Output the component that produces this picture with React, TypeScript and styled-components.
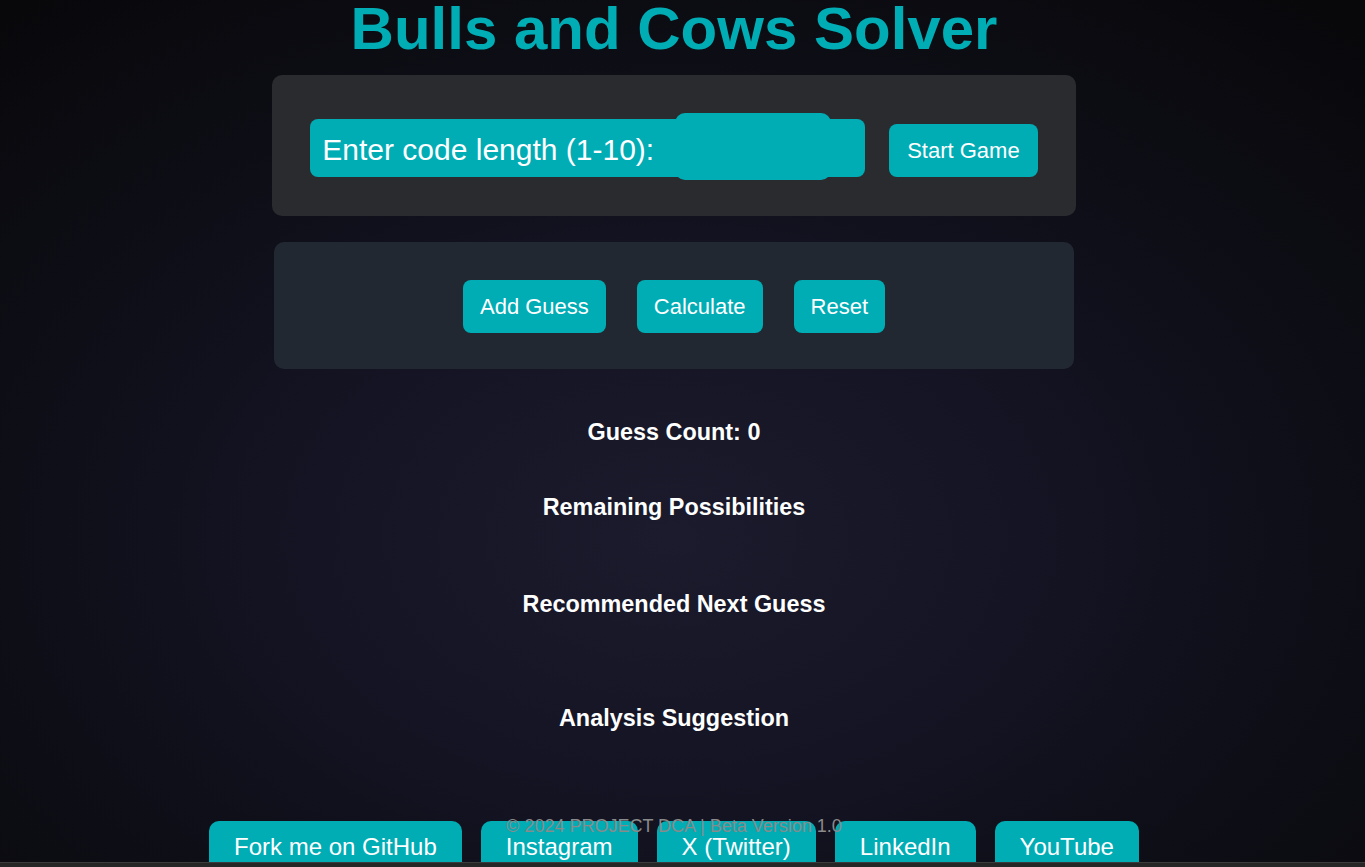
import React from "react";
import styled, { createGlobalStyle } from "styled-components";

const GlobalStyle = createGlobalStyle`
  html, body {
    margin: 0;
    padding: 0;
    height: 100%;
  }
  body {
    font-family: "Liberation Sans", Arial, sans-serif;
    background: #0b0b11;
    color: #ffffff;
  }
  #root {
    height: 100%;
  }
`;

const Page = styled.div`
  height: 100vh;
  display: grid;
  grid-template-rows: 1fr 5px;
  background: radial-gradient(
    ellipse 75% 80% at 49% 62%,
    #1b1b2d 0%,
    #141424 35%,
    #0d0d15 70%,
    #08080b 100%
  );
  overflow: hidden;
`;

const Main = styled.main`
  display: flex;
  flex-direction: column;
  align-items: center;
  padding-right: 17px;
  overflow: hidden;
  min-height: 0;
`;

const Title = styled.h1`
  margin: -1px 0 16px;
  font-size: 60px;
  line-height: 60px;
  font-weight: 700;
  color: #00adb5;
  white-space: nowrap;
`;

const Card = styled.section<{ $tone: "setup" | "actions" }>`
  border-radius: 10px;
  background: ${(p) => (p.$tone === "setup" ? "#2a2b2f" : "#222831")};
  box-sizing: border-box;
`;

const SetupCard = styled(Card)`
  width: fit-content;
  padding: 44px 38px 39px;
`;

const SetupRow = styled.div`
  display: flex;
  align-items: flex-end;
  gap: 24px;
`;

const InputGroup = styled.div`
  display: flex;
  align-items: center;
  height: 58px;
  padding: 0 34px 0 12px;
  border-radius: 8px;
  background: #00adb5;
`;

const Label = styled.label`
  padding-top: 4px;
  font-size: 30px;
  color: #ffffff;
  white-space: nowrap;
`;

const LengthInput = styled.input`
  flex-shrink: 0;
  width: 156px;
  height: 67px;
  margin: -3px 0 0 21px;
  border: none;
  border-radius: 10px;
  background: #00adb5;
  color: #ffffff;
  font-size: 24px;
  font-family: inherit;
  outline: none;
  box-sizing: border-box;
`;

const ActionButton = styled.button<{ $wide?: boolean }>`
  height: 53px;
  padding: 0 ${(p) => (p.$wide ? 18 : 17)}px;
  border: none;
  border-radius: 8px;
  background: #00adb5;
  color: #ffffff;
  font-family: "Liberation Sans", Arial, sans-serif;
  font-size: 22px;
  white-space: nowrap;
  cursor: pointer;
`;

const ActionsCard = styled(Card)`
  width: 800px;
  margin-top: 26px;
  padding: 38px 0 36px;
  display: flex;
  justify-content: center;
  gap: 31px;
`;

const Heading = styled.h3<{ $space: number }>`
  margin: ${(p) => p.$space}px 0 0;
  font-size: 23.4px;
  line-height: 27px;
  font-weight: 700;
  color: #ffffff;
  text-align: center;
`;

const Footer = styled.footer`
  position: relative;
  margin-top: 89px;
  align-self: stretch;
  display: flex;
  justify-content: center;
`;

const Links = styled.nav`
  display: flex;
  gap: 19px;
`;

const LinkButton = styled.a`
  display: block;
  padding: 12px 25px 10px;
  border-radius: 10px;
  background: #00adb5;
  color: #ffffff;
  font-size: 24px;
  line-height: 27.6px;
  text-decoration: none;
  white-space: nowrap;
`;

const Copyright = styled.p`
  position: absolute;
  top: -5px;
  left: 0;
  right: 0;
  margin: 0;
  text-align: center;
  font-size: 18px;
  line-height: 21px;
  color: #8a8a8a;
  pointer-events: none;
`;

const BottomStrip = styled.div`
  background: #262626;
  border-top: 1px solid #3b3b3b;
`;

const links = ["Fork me on GitHub", "Instagram", "X (Twitter)", "LinkedIn", "YouTube"];

export default function App() {
  return (
    <>
      <GlobalStyle />
      <Page>
        <Main>
          <Title>Bulls and Cows Solver</Title>
          <SetupCard $tone="setup">
            <SetupRow>
              <InputGroup>
                <Label htmlFor="code-length">Enter code length (1-10):</Label>
                <LengthInput id="code-length" type="number" min={1} max={10} />
              </InputGroup>
              <ActionButton $wide>Start Game</ActionButton>
            </SetupRow>
          </SetupCard>
          <ActionsCard $tone="actions">
            <ActionButton>Add Guess</ActionButton>
            <ActionButton>Calculate</ActionButton>
            <ActionButton>Reset</ActionButton>
          </ActionsCard>
          <Heading $space={50}>Guess Count: 0</Heading>
          <Heading $space={48}>Remaining Possibilities</Heading>
          <Heading $space={70}>Recommended Next Guess</Heading>
          <Heading $space={87}>Analysis Suggestion</Heading>
          <Footer>
            <Links>
              {links.map((l) => (
                <LinkButton key={l} href="#">
                  {l}
                </LinkButton>
              ))}
            </Links>
            <Copyright>© 2024 PROJECT DCA | Beta Version 1.0</Copyright>
          </Footer>
        </Main>
        <BottomStrip />
      </Page>
    </>
  );
}
